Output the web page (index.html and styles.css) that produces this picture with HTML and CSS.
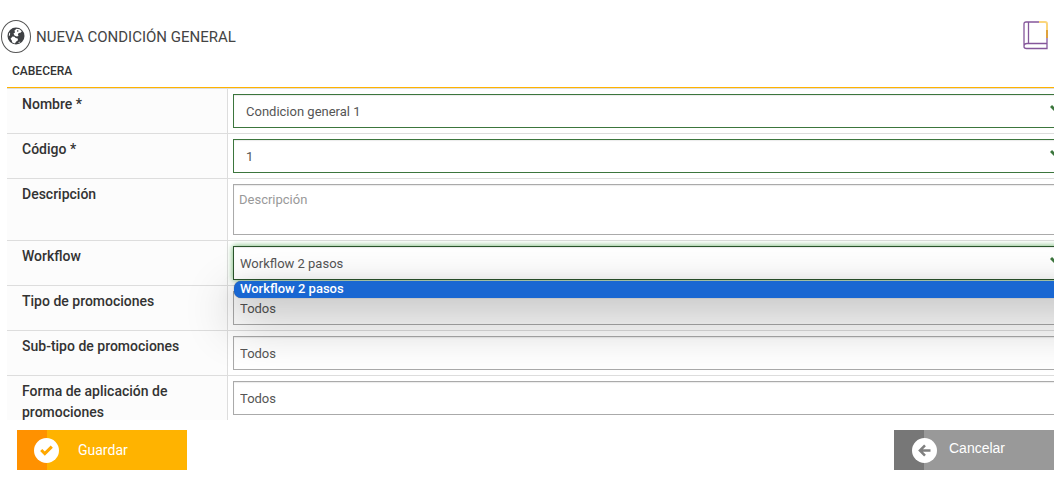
FILE: index.html
```html
<!DOCTYPE html>
<html lang="es">
<head>
    <meta charset="UTF-8">
    <meta name="viewport" content="width=device-width, initial-scale=1.0">
    <title>Nueva condición general</title>
    <link rel="stylesheet" href="styles.css">
</head>
<body>
    <header class="page-header">
        <span class="header-icon">
            <svg width="18" height="18" viewBox="0 0 18 18">
                <circle cx="9" cy="9" r="8.500" fill="#3f4144"/>
                <path d="M9.500 1.800l3 .4 2.300 2-1.300 1.500-1.800.2-.8 1.700.6 1.500-1.700.5-2.300-1.200-1-1.800L8 5.500 7.500 3.500z" fill="#fff"/>
                <path d="M5.500 9.500l2 .3 1.200 1.200 2 .6.3 1.700-1.700 1.300-1.500 1.800-2.500-.8-.6-2.300-1.200-1.500z" fill="#fff"/>
                <path d="M2.200 5.500l1 1-.4 2-1 .8zM11 15.800l2.500-1.600-1.300 1.900z" fill="#fff"/>
                <path d="M10 3.200l1.500.3-.3 1.200-1.200-.2z" fill="#3f4144"/>
            </svg>
        </span>
        <h1>NUEVA CONDICIÓN GENERAL</h1>
        <a href="#" class="help-link" aria-label="Manual">
            <svg width="25" height="29" viewBox="0 0 25 29" fill="none" stroke-width="1.300">
                <path d="M16 1H3Q1 1 1 3v22.500Q1 27.500 3.500 27.500H24V17M5.500 1v21.500M24 22.500H4Q1 22.500 1 25.500" stroke="#85579b"/>
                <path d="M16 1h6q2 0 2 2v6" stroke="#fbd67c" stroke-width="2"/>
                <path d="M24 9v8" stroke="#dfa13b" stroke-width="2"/>
            </svg>
        </a>
    </header>

    <h2 class="section-title">CABECERA</h2>

    <form id="form" class="form">
        <div class="form-row">
            <label for="nombre">Nombre *</label>
            <div class="field valid">
                <input type="text" id="nombre" value="Condicion general 1" required>
                <svg class="check" width="12" height="10" viewBox="0 0 12 10"><path d="M1 3l4 4L11 1" fill="none" stroke="#3c763d" stroke-width="3"/></svg>
            </div>
        </div>
        <div class="form-row">
            <label for="codigo">Código *</label>
            <div class="field valid">
                <input type="text" id="codigo" value="1" required>
                <svg class="check" width="12" height="10" viewBox="0 0 12 10"><path d="M1 3l4 4L11 1" fill="none" stroke="#3c763d" stroke-width="3"/></svg>
            </div>
        </div>
        <div class="form-row">
            <label for="descripcion">Descripción</label>
            <div class="field">
                <textarea id="descripcion" placeholder="Descripción"></textarea>
            </div>
        </div>
        <div class="form-row">
            <label for="workflow">Workflow</label>
            <div class="field valid open">
                <select id="workflow">
                    <option>Workflow 2 pasos</option>
                </select>
                <svg class="check" width="12" height="10" viewBox="0 0 12 10"><path d="M1 3l4 4L11 1" fill="none" stroke="#3c763d" stroke-width="3"/></svg>
                <ul class="dropdown" role="listbox">
                    <li role="option" aria-selected="true">Workflow 2 pasos</li>
                </ul>
            </div>
        </div>
        <div class="form-row">
            <label for="tipo">Tipo de promociones</label>
            <div class="field">
                <select id="tipo">
                    <option>Todos</option>
                </select>
            </div>
        </div>
        <div class="form-row">
            <label for="subtipo">Sub-tipo de promociones</label>
            <div class="field">
                <select id="subtipo">
                    <option>Todos</option>
                </select>
            </div>
        </div>
        <div class="form-row">
            <label for="forma">Forma de aplicación de promociones</label>
            <div class="field">
                <select id="forma">
                    <option>Todos</option>
                </select>
            </div>
        </div>
    </form>

    <footer class="actions">
        <button type="submit" form="form" class="btn btn-save">
            <span class="btn-icon">
                <svg width="13" height="11" viewBox="0 0 13 11"><path d="M1.200 5l3.600 3.600L11.800 1.600" fill="none" stroke="#ffa800" stroke-width="3"/></svg>
            </span>
            Guardar
        </button>
        <button type="button" class="btn btn-cancel">
            <span class="btn-icon">
                <svg width="13" height="13" viewBox="0 0 13 13"><path d="M7 1.300L1.900 6.500 7 11.700M2.200 6.500H12.500" fill="none" stroke="#808080" stroke-width="2.500"/></svg>
            </span>
            <span class="btn-text">Cancelar</span>
        </button>
    </footer>
</body>
</html>
```
FILE: styles.css
```css
* {
    box-sizing: border-box;
}
body {
    display: flex;
    flex-direction: column;
    height: 100vh;
    margin: 0;
    overflow: hidden;
    background-color: #fff;
    color: #333;
    font-family: Roboto, "Liberation Sans", sans-serif;
    font-size: 13px;
}
.page-header {
    display: flex;
    align-items: center;
    padding: 20px 6px 0 1px;
}
.header-icon {
    display: flex;
    align-items: center;
    justify-content: center;
    width: 30px;
    height: 33px;
    border: 1px solid #555;
    border-radius: 50%;
}
.header-icon svg {
    margin-bottom: 2px;
}
h1 {
    margin: 0 auto 0 5px;
    color: #444;
    font-size: 15px;
    font-weight: 400;
}
.help-link {
    display: flex;
    margin-bottom: 3px;
}
.section-title {
    margin: 0;
    padding: 9px 12px 7px;
    font-size: 12px;
    font-weight: 500;
    line-height: 18px;
}
/* the form runs past the right edge of the window */
.form {
    flex: 1;
    min-height: 0;
    margin: 0 -20px 0 7px;
    overflow: hidden;
    border-top: 1px solid #ffb300;
}
.form-row {
    display: grid;
    grid-template-columns: 220px 1fr;
    border-top: 1px solid #ddd;
}
.form-row label {
    padding: 5px 15px;
    background-color: #fcfcfc;
    font-size: 14px;
    font-weight: 500;
    line-height: 21px;
}
.field {
    position: relative;
    padding: 5px;
    border-left: 1px solid #ddd;
}
input,
select,
textarea {
    display: block;
    width: 100%;
    height: 34px;
    padding: 0 12px;
    border: 1px solid #aaa;
    border-radius: 0;
    background-color: #fff;
    box-shadow: inset 0 1px 1px rgba(0, 0, 0, 0.08);
    color: #555;
    font-family: inherit;
    font-size: 13px;
    outline: none;
}
select {
    padding: 0 6px;
    appearance: none;
}
textarea {
    height: 51px;
    padding: 7px 5px;
    resize: none;
}
textarea::placeholder {
    color: #999;
}
.valid input,
.valid select {
    border-color: #3c763d;
}
.open select {
    border-color: #2b542c;
    box-shadow: inset 0 1px 1px rgba(0, 0, 0, 0.08), 0 0 6px #67b168;
}
.check {
    position: absolute;
    top: 14px;
    right: 12px;
}
.dropdown {
    position: absolute;
    z-index: 1;
    top: 40px;
    left: 6px;
    right: -40px;
    margin: 0;
    padding: 0 0 1px;
    border-radius: 7px;
    background-color: #1967d2;
    box-shadow: 0 0 1px rgba(0, 0, 0, 0.6), 0 6px 20px rgba(0, 0, 0, 0.12), 0 20px 48px 4px rgba(0, 0, 0, 0.3);
    color: #fff;
    font-weight: 500;
    line-height: 16px;
    list-style: none;
}
.dropdown li {
    padding: 0 6px;
}
.actions {
    display: flex;
    justify-content: space-between;
    margin-right: -10px;
    padding: 10px 0 19px 17px;
}
.btn {
    display: flex;
    align-items: center;
    width: 170px;
    height: 40px;
    padding: 0 17px;
    border: 0;
    color: #fff;
    font-family: inherit;
    font-size: 14px;
    cursor: pointer;
}
.btn-icon {
    display: flex;
    align-items: center;
    justify-content: center;
    width: 25px;
    height: 25px;
    margin-right: 19px;
    border-radius: 50%;
    background-color: #fff;
}
.btn-save {
    background: linear-gradient(to right, #ff9100 30px, #ffb300 30px);
}
.btn-cancel {
    padding: 0 18px;
    background: linear-gradient(to right, #777 30px, #999 30px);
    font-family: "Liberation Sans", sans-serif;
}
.btn-cancel .btn-icon {
    margin-right: 12px;
}
.btn-text {
    padding-bottom: 4px;
}
```
